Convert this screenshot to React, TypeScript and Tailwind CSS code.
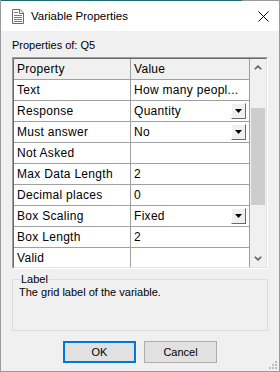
import React from 'react';

type Row = { name: string; value: string; drop?: boolean };

const rows: Row[] = [
  { name: 'Text', value: 'How many peopl...' },
  { name: 'Response', value: 'Quantity', drop: true },
  { name: 'Must answer', value: 'No', drop: true },
  { name: 'Not Asked', value: '' },
  { name: 'Max Data Length', value: '2' },
  { name: 'Decimal places', value: '0' },
  { name: 'Box Scaling', value: 'Fixed', drop: true },
  { name: 'Box Length', value: '2' },
  { name: 'Valid', value: '' },
];

const DropButton = () => (
  <div className="w-[15px] h-[16px] flex items-center justify-center bg-[#f0f0f0] border border-t-white border-l-white border-r-[#696969] border-b-[#696969]">
    <svg width="7" height="4" viewBox="0 0 7 4">
      <polygon points="0,0 7,0 3.5,4" fill="#000" />
    </svg>
  </div>
);

const Chevron = ({ up }: { up?: boolean }) => (
  <svg width="8" height="5" viewBox="0 0 8 5">
    <path d={up ? 'M0.8 4.3L4 1.1l3.2 3.2' : 'M0.8 0.7L4 3.9l3.2-3.2'} fill="none" stroke="#606060" strokeWidth="1.6" />
  </svg>
);

export default function App() {
  return (
    <div className="relative w-[280px] h-[372px] flex flex-col bg-[#f0f0f0] border-x border-b border-[#9a9a9a] text-black font-['Liberation_Sans',Arial,sans-serif] overflow-hidden">
      <div className="flex h-px shrink-0">
        <div className="w-[241px] bg-[#1d6b6e]" />
        <div className="flex-1 bg-[#9a9a9a]" />
      </div>

      {/* title bar */}
      <div className="h-[30px] shrink-0 bg-white flex items-center pl-[11px] pr-[10px]">
        <svg width="12" height="15" viewBox="0 0 12 15">
          <path d="M0.5 0.5h7.5l3.5 3.5v10.5h-11z" fill="#fff" stroke="#6b6b6b" />
          <path d="M7.5 0.5v4h4" fill="none" stroke="#6b6b6b" />
          <path d="M2 3.5h4M2 6.5h8M2 8.5h8M2 10.5h8M2 12.5h8" stroke="#7a7a7a" />
        </svg>
        <span className="ml-[7px] text-[11.5px] leading-[14px] flex-1">Variable Properties</span>
        <svg width="11" height="11" viewBox="0 0 11 11">
          <path d="M0.5 0.5l10 10M10.5 0.5l-10 10" stroke="#000" strokeWidth="1" />
        </svg>
      </div>

      {/* body */}
      <div className="flex-1 flex flex-col px-[11px] pt-[8px]">
        <div className="text-[11px] leading-[13px]">Properties of: Q5</div>

        <div className="mt-[5px] h-[212px] w-[256px] border border-t-[#a0a0a0] border-l-[#a0a0a0] border-r-white border-b-white">
          <div className="h-full flex border border-t-[#696969] border-l-[#696969] border-r-[#e3e3e3] border-b-[#e3e3e3] overflow-hidden">
            <div className="flex-1 flex flex-col bg-white text-[12px] leading-[14px] tracking-[0.3px]">
              <div className="flex h-[21px] shrink-0 bg-[#f0f0f0] border-b border-[#a0a0a0]">
                <div className="w-[117px] flex items-center pl-[3px] border-r border-[#a0a0a0]">Property</div>
                <div className="flex-1 flex items-center pl-[3px] border-r border-[#a0a0a0]">Value</div>
              </div>
              {rows.map((r) => (
                <div key={r.name} className="flex h-[21px] shrink-0 border-b border-[#a0a0a0]">
                  <div className="w-[117px] flex items-center pl-[3px] border-r border-[#a0a0a0] whitespace-nowrap">{r.name}</div>
                  <div className="flex-1 flex items-center justify-between pl-[3px] pr-[3px] border-r border-[#a0a0a0] whitespace-nowrap overflow-hidden">
                    <span>{r.value}</span>
                    {r.drop && <DropButton />}
                  </div>
                </div>
              ))}
            </div>

            {/* scrollbar */}
            <div className="w-[16px] flex flex-col bg-[#f0f0f0]">
              <div className="h-[17px] shrink-0 flex items-center justify-center">
                <Chevron up />
              </div>
              <div className="h-[32px] shrink-0" />
              <div className="h-[97px] shrink-0 mx-px bg-[#cdcdcd]" />
              <div className="flex-1" />
              <div className="h-[17px] shrink-0 flex items-center justify-center">
                <Chevron />
              </div>
            </div>
          </div>
        </div>

        <fieldset className="mt-[4px] h-[58px] w-[256px] border border-[#dcdcdc] text-[11px] leading-[13px]">
          <legend className="ml-[7px] px-px">Label</legend>
          <div className="pl-[6px]">The grid label of the variable.</div>
        </fieldset>

        <div className="mt-[10px] flex justify-center gap-[8px] text-[11px]">
          <button className="w-[73px] h-[22px] bg-[#e1e1e1] border-2 border-[#0078d7] flex items-center justify-center">OK</button>
          <button className="w-[73px] h-[22px] bg-[#e1e1e1] border border-[#adadad] flex items-center justify-center">Cancel</button>
        </div>
      </div>

      {/* size grip */}
      <svg className="absolute right-[2px] bottom-[2px]" width="10" height="10" viewBox="0 0 10 10">
        <rect x="8" y="2" width="2" height="2" fill="#bcbcbc" />
        <rect x="5" y="5" width="2" height="2" fill="#bcbcbc" />
        <rect x="8" y="5" width="2" height="2" fill="#bcbcbc" />
        <rect x="2" y="8" width="2" height="2" fill="#bcbcbc" />
        <rect x="5" y="8" width="2" height="2" fill="#bcbcbc" />
        <rect x="8" y="8" width="2" height="2" fill="#bcbcbc" />
      </svg>
    </div>
  );
}
